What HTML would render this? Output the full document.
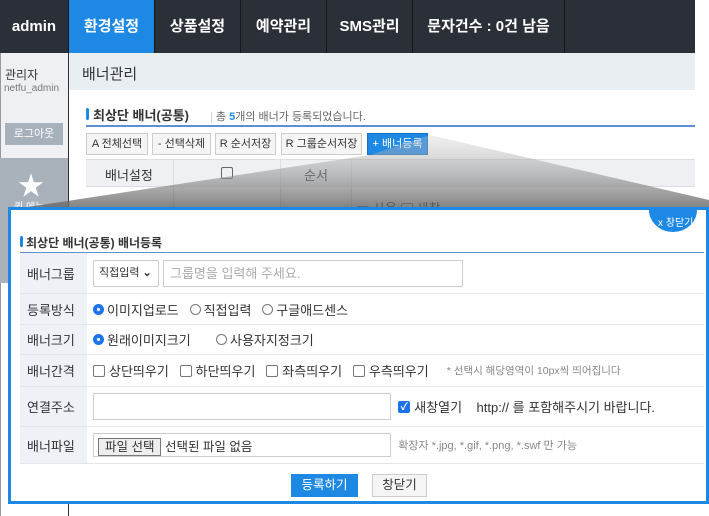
<!DOCTYPE html><html><head><meta charset="utf-8"><style>
*{box-sizing:border-box;margin:0;padding:0}
body{width:709px;height:516px;position:relative;overflow:hidden;background:#fff;font-family:"Liberation Sans","Noto Sans CJK KR",sans-serif;font-size:12px;color:#333}
.a{position:absolute}
.hdr{left:0;top:0;width:695px;height:53px;background:#2b2f38}
.tab{top:0;height:53px;color:#fff;font-size:15px;font-weight:bold;line-height:53px;text-align:center;border-right:1px solid #14161b}
.btn{height:22px;border:1px solid #ccc;background:#f5f5f5;font-size:11px;line-height:20px;text-align:center;color:#333}
.row{left:20px;width:684px;border-bottom:1px solid #e3e6ea}
.lab{position:absolute;left:0;top:0;bottom:0;width:67px;background:#eef2f7;font-size:13px;color:#333;display:flex;align-items:center;padding-left:7px}
.rad{display:inline-block;width:11px;height:11px;border:1px solid #777;border-radius:50%;vertical-align:-1px;margin-right:3px}
.rad.on{border:3px solid #1a73e8;background:#fff;box-shadow:0 0 0 1px #1a73e8 inset}
.chk{display:inline-block;width:12px;height:12px;border:1px solid #777;border-radius:2px;vertical-align:-2px;margin-right:4px;background:#fff}
.chk.on{background:#1a73e8;border-color:#1a73e8;color:#fff;font-size:10px;line-height:11px;text-align:center;font-weight:bold}
.cell{position:absolute;left:73px;top:0;bottom:0;display:flex;align-items:center;font-size:13px;white-space:nowrap}
</style></head><body>
<div class="a hdr"></div>
<div class="a tab" style="left:0;width:69px">admin</div>
<div class="a tab" style="left:69px;width:86px;background:#1e88e5">환경설정</div>
<div class="a tab" style="left:155px;width:86px">상품설정</div>
<div class="a tab" style="left:241px;width:86px">예약관리</div>
<div class="a tab" style="left:327px;width:86px">SMS관리</div>
<div class="a tab" style="left:413px;width:152px">문자건수 : 0건 남음</div>
<div class="a" style="left:0;top:53px;width:69px;height:463px;background:#fff;border-right:1px solid #333"></div>
<div class="a" style="left:0;top:53px;width:69px;height:230px;background:#eef0f3;border-right:1px solid #333"></div>
<div class="a" style="left:0;top:53px;width:1px;height:463px;background:#999"></div>
<div class="a" style="left:5px;top:66px;font-size:12px">관리자</div>
<div class="a" style="left:4px;top:83px;font-size:10px;color:#777">netfu_admin</div>
<div class="a" style="left:5px;top:123px;width:58px;height:22px;background:#a7b1bb;color:#fff;font-size:11px;line-height:22px;text-align:center">로그아웃</div>
<div class="a" style="left:0;top:158px;width:69px;height:125px;background:#a9b2bb;border-right:1px solid #333"></div>
<div class="a" style="left:18px;top:166px;color:#fff;font-size:26px">★</div>
<div class="a" style="left:14px;top:198px;color:#fff;font-size:10px">퀵 메뉴</div>
<div class="a" style="left:69px;top:53px;width:626px;height:37px;background:#e9eef3"></div>
<div class="a" style="left:82px;top:63px;font-size:15px">배너관리</div>
<div class="a" style="left:86px;top:108px;width:3px;height:12px;background:#1e88e5;border-radius:2px"></div>
<div class="a" style="left:93px;top:105px;font-size:13px;font-weight:bold">최상단 배너(공통)</div>
<div class="a" style="left:210px;top:108px;font-size:11px;color:#666"><span style="color:#ccc">|</span> 총 <b style="color:#1e88e5">5</b>개의 배너가 등록되었습니다.</div>
<div class="a" style="left:86px;top:125px;width:609px;height:2px;background:#5b8fd6"></div>
<div class="a btn" style="left:86px;top:133px;width:62px">A 전체선택</div>
<div class="a btn" style="left:152px;top:133px;width:59px">- 선택삭제</div>
<div class="a btn" style="left:215px;top:133px;width:61px">R 순서저장</div>
<div class="a btn" style="left:281px;top:133px;width:81px">R 그룹순서저장</div>
<div class="a btn" style="left:367px;top:133px;width:61px;background:#1e88e5;color:#fff;border-color:#1672c8">+ 배너등록</div>
<div class="a" style="left:86px;top:159px;width:609px;height:28px;background:#eef0f3;border-top:1px solid #ddd;border-bottom:1px solid #ddd"></div>
<div class="a" style="left:105px;top:165px;font-size:13px">배너설정</div>
<div class="a" style="left:221px;top:167px;width:12px;height:12px;border:1px solid #666;border-radius:2px"></div>
<div class="a" style="left:173px;top:159px;width:1px;height:50px;background:#ddd"></div>
<div class="a" style="left:280px;top:159px;width:1px;height:50px;background:#ddd"></div>
<div class="a" style="left:351px;top:159px;width:1px;height:50px;background:#ddd"></div>
<div class="a" style="left:304px;top:165px;font-size:13px">순서</div>
<div class="a" style="left:357px;top:198px;font-size:13px"><span class="chk on">✓</span>사용 <span class="chk"></span>새창</div>
<svg class="a" style="left:0;top:0" width="709" height="216"><defs><linearGradient id="g" x1="0" y1="0" x2="0" y2="1"><stop offset="0" stop-color="#ccc" stop-opacity=".3"/><stop offset="1" stop-color="#555" stop-opacity=".85"/></linearGradient></defs><polygon points="370,155 430,135 709,200 709,216 8,216 8,210" fill="url(#g)"/></svg>
<div class="a" style="left:8px;top:207px;width:701px;height:297px;border:3px solid #1e88e5;background:#fff;overflow:hidden">
<div class="a" style="left:638px;top:-22px;width:48px;height:44px;background:#1e88e5;border-radius:50%"></div>
<div class="a" style="left:647px;top:4px;color:#fff;font-size:10px">x 창닫기</div>
</div>
<div class="a" style="left:20px;top:236px;width:3px;height:11px;background:#1e88e5;border-radius:2px"></div>
<div class="a" style="left:26px;top:234px;font-size:12px;font-weight:bold">최상단 배너(공통) 배너등록</div>
<div class="a" style="left:20px;top:252px;width:684px;height:1px;background:#5b8fd6"></div>
<div class="a row" style="top:253px;height:41px"><div class="lab">배너그룹</div><div class="cell">
<span style="display:inline-block;width:66px;height:27px;border:1px solid #ccc;border-radius:2px;font-size:11px;line-height:25px;padding-left:5px">직접입력 <b>⌄</b></span>
<span style="display:inline-block;width:300px;height:27px;border:1px solid #ccc;margin-left:4px;color:#aaa;line-height:25px;padding-left:6px">그룹명을 입력해 주세요.</span></div></div>
<div class="a row" style="top:294px;height:31px"><div class="lab">등록방식</div><div class="cell"><span class="rad on"></span>이미지업로드&nbsp;&nbsp;&nbsp;<span class="rad"></span>직접입력&nbsp;&nbsp;&nbsp;<span class="rad"></span>구글애드센스</div></div>
<div class="a row" style="top:325px;height:30px"><div class="lab">배너크기</div><div class="cell"><span class="rad on"></span>원래이미지크기&nbsp;&nbsp;&nbsp;&nbsp;&nbsp;&nbsp;&nbsp;<span class="rad"></span>사용자지정크기</div></div>
<div class="a row" style="top:355px;height:32px"><div class="lab">배너간격</div><div class="cell"><span class="chk"></span>상단띄우기&nbsp;&nbsp;&nbsp;<span class="chk"></span>하단띄우기&nbsp;&nbsp;&nbsp;<span class="chk"></span>좌측띄우기&nbsp;&nbsp;&nbsp;<span class="chk"></span>우측띄우기&nbsp;&nbsp;&nbsp;&nbsp;&nbsp;<span style="font-size:10.5px;color:#888">* 선택시 해당영역이 10px씩 띄어집니다</span></div></div>
<div class="a row" style="top:387px;height:40px"><div class="lab">연결주소</div><div class="cell"><span style="display:inline-block;width:298px;height:27px;border:1px solid #ccc"></span>&nbsp;&nbsp;<span class="chk on">✓</span>새창열기&nbsp;&nbsp;&nbsp;&nbsp;http:// 를 포함해주시기 바랍니다.</div></div>
<div class="a row" style="top:427px;height:37px"><div class="lab">배너파일</div><div class="cell"><span style="display:inline-block;width:298px;height:24px;border:1px solid #ccc;padding:2px 4px;font-size:12.5px"><span style="display:inline-block;border:1px solid #777;background:#eee;padding:0 6px;height:18px;line-height:17px">파일 선택</span> 선택된 파일 없음</span>&nbsp;&nbsp;<span style="font-size:11px;color:#888">확장자 *.jpg, *.gif, *.png, *.swf 만 가능</span></div></div>
<div class="a" style="left:291px;top:474px;width:67px;height:23px;background:#1e88e5;color:#fff;text-align:center;line-height:23px;font-size:12.5px">등록하기</div>
<div class="a" style="left:372px;top:474px;width:55px;height:23px;background:#f5f5f5;border:1px solid #ccc;text-align:center;line-height:21px;font-size:12.5px">창닫기</div>
</body></html>
